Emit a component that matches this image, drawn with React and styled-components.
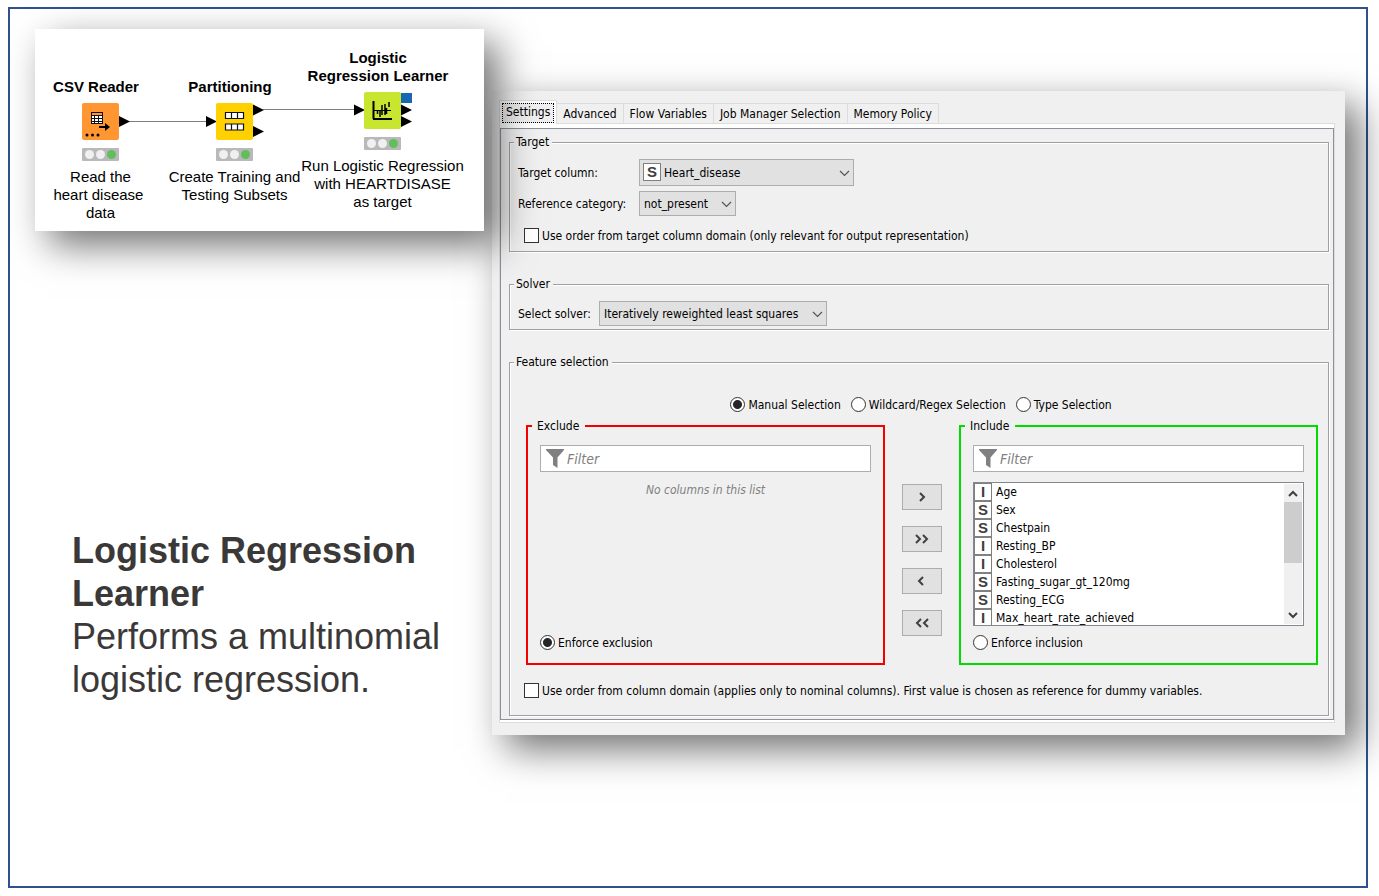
import React, { useState } from "react";
import styled, { createGlobalStyle, css } from "styled-components";

const UI_FONT = '"DejaVu Sans Condensed", Tahoma, "Noto Sans", sans-serif';
const TEXT_FONT = '"Liberation Sans", Arial, sans-serif';

const GlobalStyle = createGlobalStyle`
  *, *::before, *::after { box-sizing: border-box; }
  body { margin: 0; background: #fff; font-family: ${TEXT_FONT}; }
  h1, p, ul { margin: 0; padding: 0; }
`;

/* ---------- slide ---------- */

const Slide = styled.main`
  display: grid;
  grid-template-columns: 449px minmax(0, 1fr);
  column-gap: 8px;
  align-items: start;
  min-height: calc(100vh - 15px);
  margin: 7px 11px 8px 8px;
  padding: 20px 21px 20px 25px;
  border: 2px solid #2f528f;
`;

const shadow = css`
  box-shadow: 14px 14px 36px rgba(0, 0, 0, 0.56);
`;

const Description = styled.section`
  margin-top: 298px;
  padding-left: 37px;
  font-size: 36px;
  line-height: 43px;
  color: #3b3838;
`;

const Heading = styled.h1`
  font-size: 36px;
  font-weight: 700;
  line-height: 43px;
`;

/* ---------- workflow ---------- */

const Workflow = styled.figure`
  position: relative;
  z-index: 1;
  height: 202px;
  margin: 0;
  background: #fff;
  ${shadow}
`;

const Wires = styled.svg`
  position: absolute;
  inset: 0;
  width: 100%;
  height: 100%;
`;

const Node = styled.div`
  position: absolute;
  left: ${(p) => p.$x}px;
  top: ${(p) => p.$y}px;
  width: 37px;
  display: flex;
  flex-direction: column;
  align-items: center;
  font-size: 15px;
  line-height: 18px;
  color: #000;
  text-align: center;
  white-space: pre;
`;

const NodeTitle = styled.div`
  padding-right: 9px;
  margin-bottom: 7px;
  font-weight: 700;
`;

const NodeIcon = styled.svg`
  display: block;
  flex: none;
  width: 37px;
  height: 37px;
  border-radius: 2px;
  background: ${(p) => p.$color};
`;

const Lights = styled.div`
  display: flex;
  align-items: center;
  justify-content: center;
  gap: 2px;
  width: 37px;
  height: 13px;
  margin: 8px 0 7px;
  border-radius: 1px;
  background: #b9b9b9;
`;

const Light = styled.span`
  width: 9px;
  height: 9px;
  border-radius: 50%;
  background: ${(p) => (p.$on ? "#62bd5b" : "#f0f0f0")};
`;

/* ---------- dialog ---------- */

const Dialog = styled.form`
  margin-top: 62px;
  padding: 9px 10px 12px 7px;
  background: #f0f0f0;
  font-family: ${UI_FONT};
  font-size: 12px;
  line-height: 16px;
  color: #000;
  ${shadow}
`;

const Tabs = styled.div`
  display: flex;
  align-items: flex-end;
`;

const Tab = styled.button`
  height: ${(p) => (p.$active ? 24 : 20)}px;
  margin: 0 0 ${(p) => (p.$active ? -1 : 0)}px;
  padding: ${(p) => (p.$active ? "2px" : "0 6px")};
  border: 1px solid #dcdcdc;
  border-width: ${(p) => (p.$active ? "1px 1px 0 1px" : "1px 1px 0 0")};
  background: ${(p) => (p.$active ? "#fff" : "#f0f0f0")};
  font: inherit;
  color: inherit;
  position: relative;
`;

const TabFocus = styled.span`
  display: block;
  height: 20px;
  padding: 0 3px;
  border: 1px dotted #000;
  background: #f0f0f0;
`;

const TabBody = styled.div`
  padding: 4px 0 2px;
  border: 1px solid #dcdcdc;
  background: #fff;
`;

const Pane = styled.div`
  display: flex;
  flex-direction: column;
  gap: 24px;
  padding: 5px 4px 3px 8px;
  border: 1px solid #8b909b;
  background: #f0f0f0;
`;

const Group = styled.fieldset`
  min-width: 0;
  margin: 0;
  padding: ${(p) => p.$pad};
  border: 1px solid #a0a0a0;
  box-shadow: inset 1px 1px 0 #fff, 1px 1px 0 #fff;
`;

const GroupLegend = styled.legend`
  margin-left: -4px;
  padding: 0 3px 0 2px;
  height: 16px;
  background: #f0f0f0;
`;

const Field = styled.div`
  display: grid;
  grid-template-columns: ${(p) => p.$label}px auto;
  justify-content: start;
  align-items: center;
  margin-bottom: ${(p) => p.$gap || 0}px;
`;

const SelectBox = styled.div`
  position: relative;
  width: ${(p) => p.$width}px;
  height: ${(p) => (p.$tall ? 27 : 25)}px;
`;

const Select = styled.select`
  appearance: none;
  display: block;
  width: 100%;
  height: 100%;
  padding: 0 20px 0 ${(p) => (p.$icon ? 24 : 4)}px;
  border: 1px solid #adadad;
  border-radius: 0;
  background: #e1e1e1;
  font: inherit;
  color: inherit;
`;

const SelectArrow = styled.svg`
  position: absolute;
  right: 4px;
  top: 50%;
  width: 11px;
  height: 7px;
  margin-top: -3px;
  pointer-events: none;
`;

const SelectIcon = styled.span`
  position: absolute;
  left: 4px;
  top: 4px;
  pointer-events: none;
`;

const TypeBadge = styled.span`
  display: block;
  width: 18px;
  height: 18px;
  border: 1px solid #808080;
  background: #fff;
  font: 700 15px/16px ${TEXT_FONT};
  color: #404040;
  text-align: center;
`;

const Choice = styled.label`
  display: flex;
  align-items: center;
  gap: 3px;
  height: 15px;
  white-space: nowrap;
  margin-left: ${(p) => p.$indent || 0}px;
`;

const Check = styled.input`
  appearance: none;
  flex: none;
  width: 15px;
  height: 15px;
  margin: 0;
  border: 1px solid #333;
  border-radius: ${(p) => (p.type === "radio" ? "50%" : "0")};
  background: #fff;
  &:checked {
    background: radial-gradient(circle, #262626 0 4px, #fff 5px);
  }
`;

const Modes = styled.div`
  display: flex;
  justify-content: center;
  gap: 10px;
  padding-left: 4px;
  margin-bottom: 6px;
`;

const Picker = styled.div`
  display: grid;
  grid-template-columns: minmax(0, 1fr) 74px minmax(0, 1fr);
  margin: 0 2px 18px 8px;
`;

const ColumnSet = styled.fieldset`
  display: flex;
  flex-direction: column;
  min-width: 0;
  margin: 0;
  padding: 11px 12px 13px;
  border: 2px solid ${(p) => p.$color};
`;

const ColumnLegend = styled.legend`
  height: 16px;
  margin-left: -8px;
  padding: 0 6px 0 5px;
`;

const FilterBox = styled.div`
  position: relative;
  height: 27px;
  margin-bottom: 10px;
`;

const FilterInput = styled.input`
  display: block;
  width: 100%;
  height: 100%;
  padding: 0 4px 0 26px;
  border: 1px solid #abadb3;
  background: #fff;
  font-family: inherit;
  font-size: 14px;
  font-style: italic;
  &::placeholder { color: #808080; opacity: 1; }
`;

const FilterIcon = styled.svg`
  position: absolute;
  left: 6px;
  top: 4px;
  width: 18px;
  height: 19px;
`;

const EmptyNote = styled.p`
  flex: 1;
  font-style: italic;
  color: #808080;
  text-align: center;
`;

const ListBox = styled.div`
  display: flex;
  height: 144px;
  margin-bottom: 9px;
  border: 1px solid #828790;
  background: #fff;
  overflow: hidden;
`;

const Items = styled.ul`
  flex: 1;
  min-width: 0;
  list-style: none;
`;

const Item = styled.li`
  display: flex;
  align-items: center;
  gap: 4px;
  height: 18px;
`;

const ScrollBar = styled.div`
  display: flex;
  flex-direction: column;
  width: 18px;
  margin: 1px;
  background: #f0f0f0;
`;

const ScrollButton = styled.button`
  display: grid;
  place-items: center;
  height: 18px;
  margin: ${(p) => (p.$last ? "auto 0 0" : "0")};
  padding: 0;
  border: 0;
  background: none;
`;

const Thumb = styled.div`
  height: 61px;
  background: #cdcdcd;
`;

const Movers = styled.div`
  display: flex;
  flex-direction: column;
  align-items: center;
  gap: 16px;
  padding-top: 66px;
`;

const Mover = styled.button`
  display: grid;
  place-items: center;
  width: 40px;
  height: 26px;
  padding: 0;
  border: 1px solid #adadad;
  background: #e1e1e1;
`;

const Chevron = ({ d, w, h, stroke = 2, color = "#404040" }) => (
  <svg width={w} height={h} viewBox={`0 0 ${w} ${h}`} fill="none" stroke={color} strokeWidth={stroke} aria-hidden="true">
    <path d={d} />
  </svg>
);

const Dropdown = ({ id, width, value, badge }) => (
  <SelectBox $width={width} $tall={!!badge}>
    <Select id={id} $icon={!!badge} defaultValue={value}>
      <option>{value}</option>
    </Select>
    {badge && (
      <SelectIcon>
        <TypeBadge>{badge}</TypeBadge>
      </SelectIcon>
    )}
    <SelectArrow viewBox="0 0 11 7" fill="none" stroke="#555">
      <path d="M1 1l4.500 4.500L10 1" strokeWidth="1.200" />
    </SelectArrow>
  </SelectBox>
);

const Filter = ({ label }) => (
  <FilterBox>
    <FilterInput placeholder="Filter" aria-label={label} />
    <FilterIcon viewBox="0 0 18 19" fill="#808080" aria-hidden="true">
      <path d="M0 0h18v1l-6.500 7.500V19L7 16V8.500L0 1z" />
    </FilterIcon>
  </FilterBox>
);

const Status = () => (
  <Lights>
    <Light />
    <Light />
    <Light $on />
  </Lights>
);

const columns = [
  ["I", "Age"],
  ["S", "Sex"],
  ["S", "Chestpain"],
  ["I", "Resting_BP"],
  ["I", "Cholesterol"],
  ["S", "Fasting_sugar_gt_120mg"],
  ["S", "Resting_ECG"],
  ["I", "Max_heart_rate_achieved"],
];

const movers = [
  ["Include selected", "M2 1l4 4l-4 4", 8],
  ["Include all", "M1 1l4 4l-4 4M8 1l4 4l-4 4", 14],
  ["Exclude selected", "M6 1l-4 4l4 4", 10],
  ["Exclude all", "M6 1l-4 4l4 4M13 1l-4 4l4 4", 14],
];

const tabs = ["Settings", "Advanced", "Flow Variables", "Job Manager Selection", "Memory Policy"];
const modes = ["Manual Selection", "Wildcard/Regex Selection", "Type Selection"];

const WorkflowCard = () => (
  <Workflow>
    <Wires viewBox="0 0 449 202" preserveAspectRatio="xMinYMin meet" aria-hidden="true">
      <path d="M94 92.500H171M228 80.500H319" stroke="#808080" fill="none" />
      <path d="M84 87l11 5.500l-11 5.500zM171 87l11 5.500l-11 5.500zM218 75.500l11 5.500l-11 5.500zM218 97l11 5.500l-11 5.500zM319 75.500l11 5.500l-11 5.500zM366 75.500l11 5.500l-11 5.500zM366 87l11 5.500l-11 5.500z" />
      <path d="M366 64h11v10h-11z" fill="#1668b3" />
    </Wires>
    <Node $x={47} $y={49}>
      <NodeTitle>CSV Reader</NodeTitle>
      <NodeIcon $color="#ff9632" viewBox="0 0 37 37" aria-hidden="true">
        <path d="M9 9h12v12H9z" fill="#111" />
        <path d="M10 10h10v2H10z" fill="#ff9632" />
        <path d="M10 13h2v2h-2zM13 13h3v2h-3zM17 13h3v2h-3zM10 16h2v2h-2zM13 16h3v2h-3zM17 16h3v2h-3zM10 19h2v1h-2zM13 19h3v1h-3zM17 19h3v1h-3z" fill="#fff" />
        <path d="M17 24h8" stroke="#000" strokeWidth="2" />
        <path d="M23 20l5 4l-5 4z" />
        <circle cx="5" cy="32" r="1.500" />
        <circle cx="10.500" cy="32" r="1.500" />
        <circle cx="16" cy="32" r="1.500" />
      </NodeIcon>
      <Status />
      <div>{"Read the\nheart disease \ndata"}</div>
    </Node>
    <Node $x={181} $y={49}>
      <NodeTitle>Partitioning</NodeTitle>
      <NodeIcon $color="#ffd100" viewBox="0 0 37 37" aria-hidden="true">
        <path
          d="M9.500 9.500h18v6h-18zM15.500 9.500v6M21.500 9.500v6M9.500 21h18v6h-18zM15.500 21v6M21.500 21v6"
          fill="#fff"
          stroke="#111"
          strokeWidth="1.200"
        />
      </NodeIcon>
      <Status />
      <div>{"Create Training and\nTesting Subsets"}</div>
    </Node>
    <Node $x={329} $y={20}>
      <NodeTitle>{"Logistic\nRegression Learner"}</NodeTitle>
      <NodeIcon $color="#c8e62f" viewBox="0 0 37 37" aria-hidden="true">
        <g fill="none" stroke="#000">
          <path d="M9.500 9v18M9 27h19" strokeWidth="2" />
          <path d="M10 18.500h17" strokeWidth="1.200" />
          <path d="M13.500 18v4M16 18v7M18 13v10M21 12v11M22.500 16v6M25 10v5" strokeWidth="1.500" />
        </g>
      </NodeIcon>
      <Status />
      <div>{"Run Logistic Regression\nwith HEARTDISASE\nas target"}</div>
    </Node>
  </Workflow>
);

export default function App() {
  const [mode, setMode] = useState(modes[0]);
  const [enforce, setEnforce] = useState("exclusion");

  return (
    <>
      <GlobalStyle />
      <Slide>
        <div>
          <WorkflowCard />
          <Description>
            <Heading>Logistic Regression Learner</Heading>
            <p>Performs a multinomial logistic regression.</p>
          </Description>
        </div>

        <Dialog>
          <Tabs role="tablist">
            {tabs.map((name, i) => (
              <Tab key={name} type="button" role="tab" aria-selected={i === 0} $active={i === 0}>
                {i === 0 ? <TabFocus>{name}</TabFocus> : name}
              </Tab>
            ))}
          </Tabs>
          <TabBody>
            <Pane>
              <Group $pad="9px 8px 8px">
                <GroupLegend>Target</GroupLegend>
                <Field $label={121} $gap={5}>
                  <label htmlFor="target">Target column:</label>
                  <Dropdown id="target" width={215} value="Heart_disease" badge="S" />
                </Field>
                <Field $label={121} $gap={12}>
                  <label htmlFor="reference">Reference category:</label>
                  <Dropdown id="reference" width={97} value="not_present" />
                </Field>
                <Choice $indent={6}>
                  <Check type="checkbox" />
                  Use order from target column domain (only relevant for output representation)
                </Choice>
              </Group>

              <Group $pad="9px 8px 3px">
                <GroupLegend>Solver</GroupLegend>
                <Field $label={81}>
                  <label htmlFor="solver">Select solver:</label>
                  <Dropdown id="solver" width={228} value="Iteratively reweighted least squares" />
                </Field>
              </Group>

              <Group $pad="27px 8px 17px">
                <GroupLegend>Feature selection</GroupLegend>
                <Modes>
                  {modes.map((name) => (
                    <Choice key={name}>
                      <Check type="radio" name="mode" checked={mode === name} onChange={() => setMode(name)} />
                      {name}
                    </Choice>
                  ))}
                </Modes>
                <Picker>
                  <ColumnSet $color="#f50000">
                    <ColumnLegend>Exclude</ColumnLegend>
                    <Filter label="Filter excluded columns" />
                    <EmptyNote>No columns in this list</EmptyNote>
                    <Choice>
                      <Check
                        type="radio"
                        name="enforce"
                        checked={enforce === "exclusion"}
                        onChange={() => setEnforce("exclusion")}
                      />
                      Enforce exclusion
                    </Choice>
                  </ColumnSet>
                  <Movers>
                    {movers.map(([label, d, w]) => (
                      <Mover key={label} type="button" aria-label={label}>
                        <Chevron d={d} w={w} h={10} />
                      </Mover>
                    ))}
                  </Movers>
                  <ColumnSet $color="#00dc00">
                    <ColumnLegend>Include</ColumnLegend>
                    <Filter label="Filter included columns" />
                    <ListBox>
                      <Items>
                        {columns.map(([type, name]) => (
                          <Item key={name}>
                            <TypeBadge>{type}</TypeBadge>
                            {name}
                          </Item>
                        ))}
                      </Items>
                      <ScrollBar>
                        <ScrollButton type="button" aria-label="Scroll up">
                          <Chevron d="M1 6l4-4l4 4" w={10} h={7} />
                        </ScrollButton>
                        <Thumb />
                        <ScrollButton type="button" aria-label="Scroll down" $last>
                          <Chevron d="M1 1l4 4l4-4" w={10} h={7} />
                        </ScrollButton>
                      </ScrollBar>
                    </ListBox>
                    <Choice>
                      <Check
                        type="radio"
                        name="enforce"
                        checked={enforce === "inclusion"}
                        onChange={() => setEnforce("inclusion")}
                      />
                      Enforce inclusion
                    </Choice>
                  </ColumnSet>
                </Picker>
                <Choice $indent={6}>
                  <Check type="checkbox" />
                  Use order from column domain (applies only to nominal columns). First value is chosen as reference for dummy
                  variables.
                </Choice>
              </Group>
            </Pane>
          </TabBody>
        </Dialog>
      </Slide>
    </>
  );
}
